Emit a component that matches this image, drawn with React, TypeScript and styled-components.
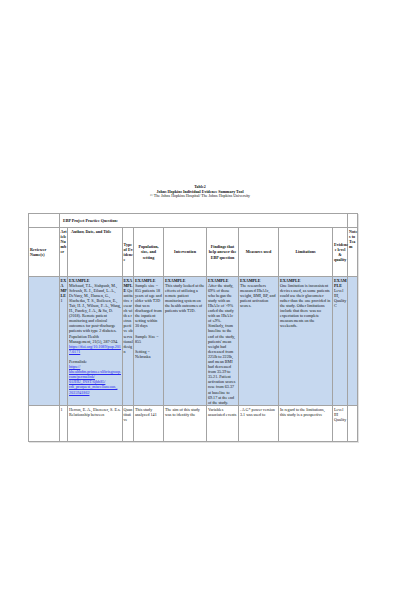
import React from "react";
import styled, { createGlobalStyle } from "styled-components";

const GlobalStyle = createGlobalStyle`
  html, body {
    margin: 0;
    padding: 0;
    background: #ffffff;
  }
  body {
    font-family: "Liberation Serif", "Times New Roman", serif;
    color: #111111;
  }
`;

const Page = styled.div`
  width: 400px;
  height: 600px;
  background: #ffffff;
  padding-top: 185px;
  box-sizing: border-box;
`;

const Title = styled.div`
  text-align: center;
  font-size: 4px;
  line-height: 4.5px;
`;

const TitleLine = styled.div<{ $bold?: boolean }>`
  font-weight: ${(p) => (p.$bold ? 700 : 400)};
`;

const Sheet = styled.table`
  margin: 14px 0 0 28px;
  width: 329px;
  table-layout: fixed;
  border-collapse: collapse;
  font-size: 4.1px;
  line-height: 5.1px;
  box-shadow: 1px 1px 0 #e2e2e2;
`;

const Cell = styled.td<{ $center?: boolean; $narrow?: boolean; $top?: boolean; $spill?: boolean }>`
  border: 1px solid #a3a3a3;
  padding: ${(p) => (p.$narrow ? "1px 0 0 0.5px" : "1px 1px 0 1px")};
  vertical-align: ${(p) => (p.$top ? "top" : "middle")};
  text-align: ${(p) => (p.$center ? "center" : "left")};
  word-break: ${(p) => (p.$narrow ? "break-all" : "normal")};
  overflow-wrap: ${(p) => (p.$spill ? "normal" : "anywhere")};
  overflow: visible;
`;

const HeadCell = styled(Cell)`
  font-weight: 700;
`;

const Row = styled.tr<{ $h: number; $shade?: boolean }>`
  height: ${(p) => p.$h}px;
  background: ${(p) => (p.$shade ? "#c6d8ef" : "transparent")};
  & > td {
    vertical-align: top;
  }
`;

const HeadRow = styled.tr<{ $h: number }>`
  height: ${(p) => p.$h}px;
`;

const Strong = styled.b`
  font-weight: 700;
`;

const Link = styled.span`
  color: #2a2af0;
  text-decoration: underline;
`;

const Gap = styled.div`
  height: 5.1px;
`;

const cols = [31, 8, 55, 11, 30, 43, 32, 40, 54, 15, 10];

export default function App() {
  return (
    <Page>
      <GlobalStyle />
      <Title>
        <TitleLine $bold>Table2</TitleLine>
        <TitleLine $bold>Johns Hopkins Individual Evidence Summary Tool</TitleLine>
        <TitleLine>© The Johns Hopkins Hospital/ The Johns Hopkins University</TitleLine>
      </Title>
      <Sheet>
        <colgroup>
          {cols.map((w, i) => (
            <col key={i} style={{ width: w }} />
          ))}
        </colgroup>
        <tbody>
          <HeadRow $h={14}>
            <HeadCell />
            <HeadCell colSpan={9} style={{ paddingLeft: 3 }}>
              EBP Project Practice Question:
            </HeadCell>
            <HeadCell />
          </HeadRow>
          <HeadRow $h={49}>
            <HeadCell>Reviewer Name(s)</HeadCell>
            <HeadCell $narrow $top>
              Article Number
            </HeadCell>
            <HeadCell $top style={{ paddingLeft: 3 }}>
              Author, Date, and Title
            </HeadCell>
            <HeadCell $narrow>Type of Evidence</HeadCell>
            <HeadCell $center>Population, size, and setting</HeadCell>
            <HeadCell $center>Intervention</HeadCell>
            <HeadCell $center>Findings that help answer the EBP question</HeadCell>
            <HeadCell $center>Measures used</HeadCell>
            <HeadCell $center>Limitations</HeadCell>
            <HeadCell $center $spill>
              Evidenc<wbr />e level &amp; quality
            </HeadCell>
            <HeadCell $top $spill>
              Note<wbr />s to Tea<wbr />m
            </HeadCell>
          </HeadRow>
          <Row $h={126} $shade>
            <Cell />
            <Cell $narrow>
              <Strong>EXAMPLE</Strong> 1
            </Cell>
            <Cell>
              <Strong>EXAMPLE</Strong>
              <br />
              Michaud, T.L., Siahpush, M., Schwab, R. J., Eiland, L. A.,
              DeVany, M., Hansen, G., Slachetka, T. S., Boilesen, E., Tait, H.
              J., Wilson, F. A., Wang, H., Pandey, J. A., &amp; Su, D. (2018).
              Remote patient monitoring and clinical outcomes for post-discharge
              patients with type 2 diabetes. Population Health Management,
              21(5), 387-394.{" "}
              <Link>https://doi.org/10.1089/pop.2017.0171</Link>
              <Gap />
              Permalink:
              <br />
              <Link>
                https://
                <br />
                khealthdm.primo.exlibrisgroup.com/permalink/
                01JHU_INST/6jbh85/ cdi_proquest_miscellaneous_ 2035941862
              </Link>
            </Cell>
            <Cell $narrow>
              <Strong>EXAMPLE</Strong> Quantitative research with a
              retrospective observational design
            </Cell>
            <Cell>
              <Strong>EXAMPLE</Strong>
              <br />
              Sample size = 855 patients 18 years of age and older with T2D
              that were discharged from the inpatient setting within 30 days
              <Gap />
              Sample Size = 855
              <Gap />
              Setting = Nebraska
            </Cell>
            <Cell>
              <Strong>EXAMPLE</Strong>
              <br />
              This study looked at the effects of utilizing a remote patient
              monitoring system on the health outcomes of patients with T2D.
            </Cell>
            <Cell>
              <Strong>EXAMPLE</Strong>
              <br />
              After the study, 69% of those who began the study with an HbA1c
              of &gt;9% ended the study with an HbA1c of ≤9%. Similarly, from
              baseline to the end of the study, patients' mean weight had
              decreased from 225lb to 222lb, and mean BMI had decreased from
              35.39 to 35.21. Patient activation scores rose from 63.37 at
              baseline to 69.17 at the end of the study.
            </Cell>
            <Cell>
              <Strong>EXAMPLE</Strong>
              <br />
              The researchers measured HbA1c, weight, BMI, BP, and patient
              activation scores.
            </Cell>
            <Cell>
              <Strong>EXAMPLE</Strong>
              <br />
              One limitation is inconsistent devices used, as some patients
              could use their glucometer rather than the one provided in the
              study. Other limitations include that there was no expectation
              to complete measurements on the weekends.
            </Cell>
            <Cell $spill>
              <Strong>
                EXAM<wbr />PLE
              </Strong>{" "}
              Level III, Quality C
            </Cell>
            <Cell />
          </Row>
          <Row $h={36}>
            <Cell />
            <Cell $narrow>1</Cell>
            <Cell>Herron, E. A., Ebenezer, S. E.s. Relationship between</Cell>
            <Cell $narrow>Quantitative</Cell>
            <Cell>This study analyzed 141</Cell>
            <Cell>The aim of this study was to identify the</Cell>
            <Cell>Variables associated events</Cell>
            <Cell>. A G* power version 3.1 was used to</Cell>
            <Cell>In regard to the limitations, this study is a prospective</Cell>
            <Cell $spill>Level III Quality</Cell>
            <Cell />
          </Row>
        </tbody>
      </Sheet>
    </Page>
  );
}
